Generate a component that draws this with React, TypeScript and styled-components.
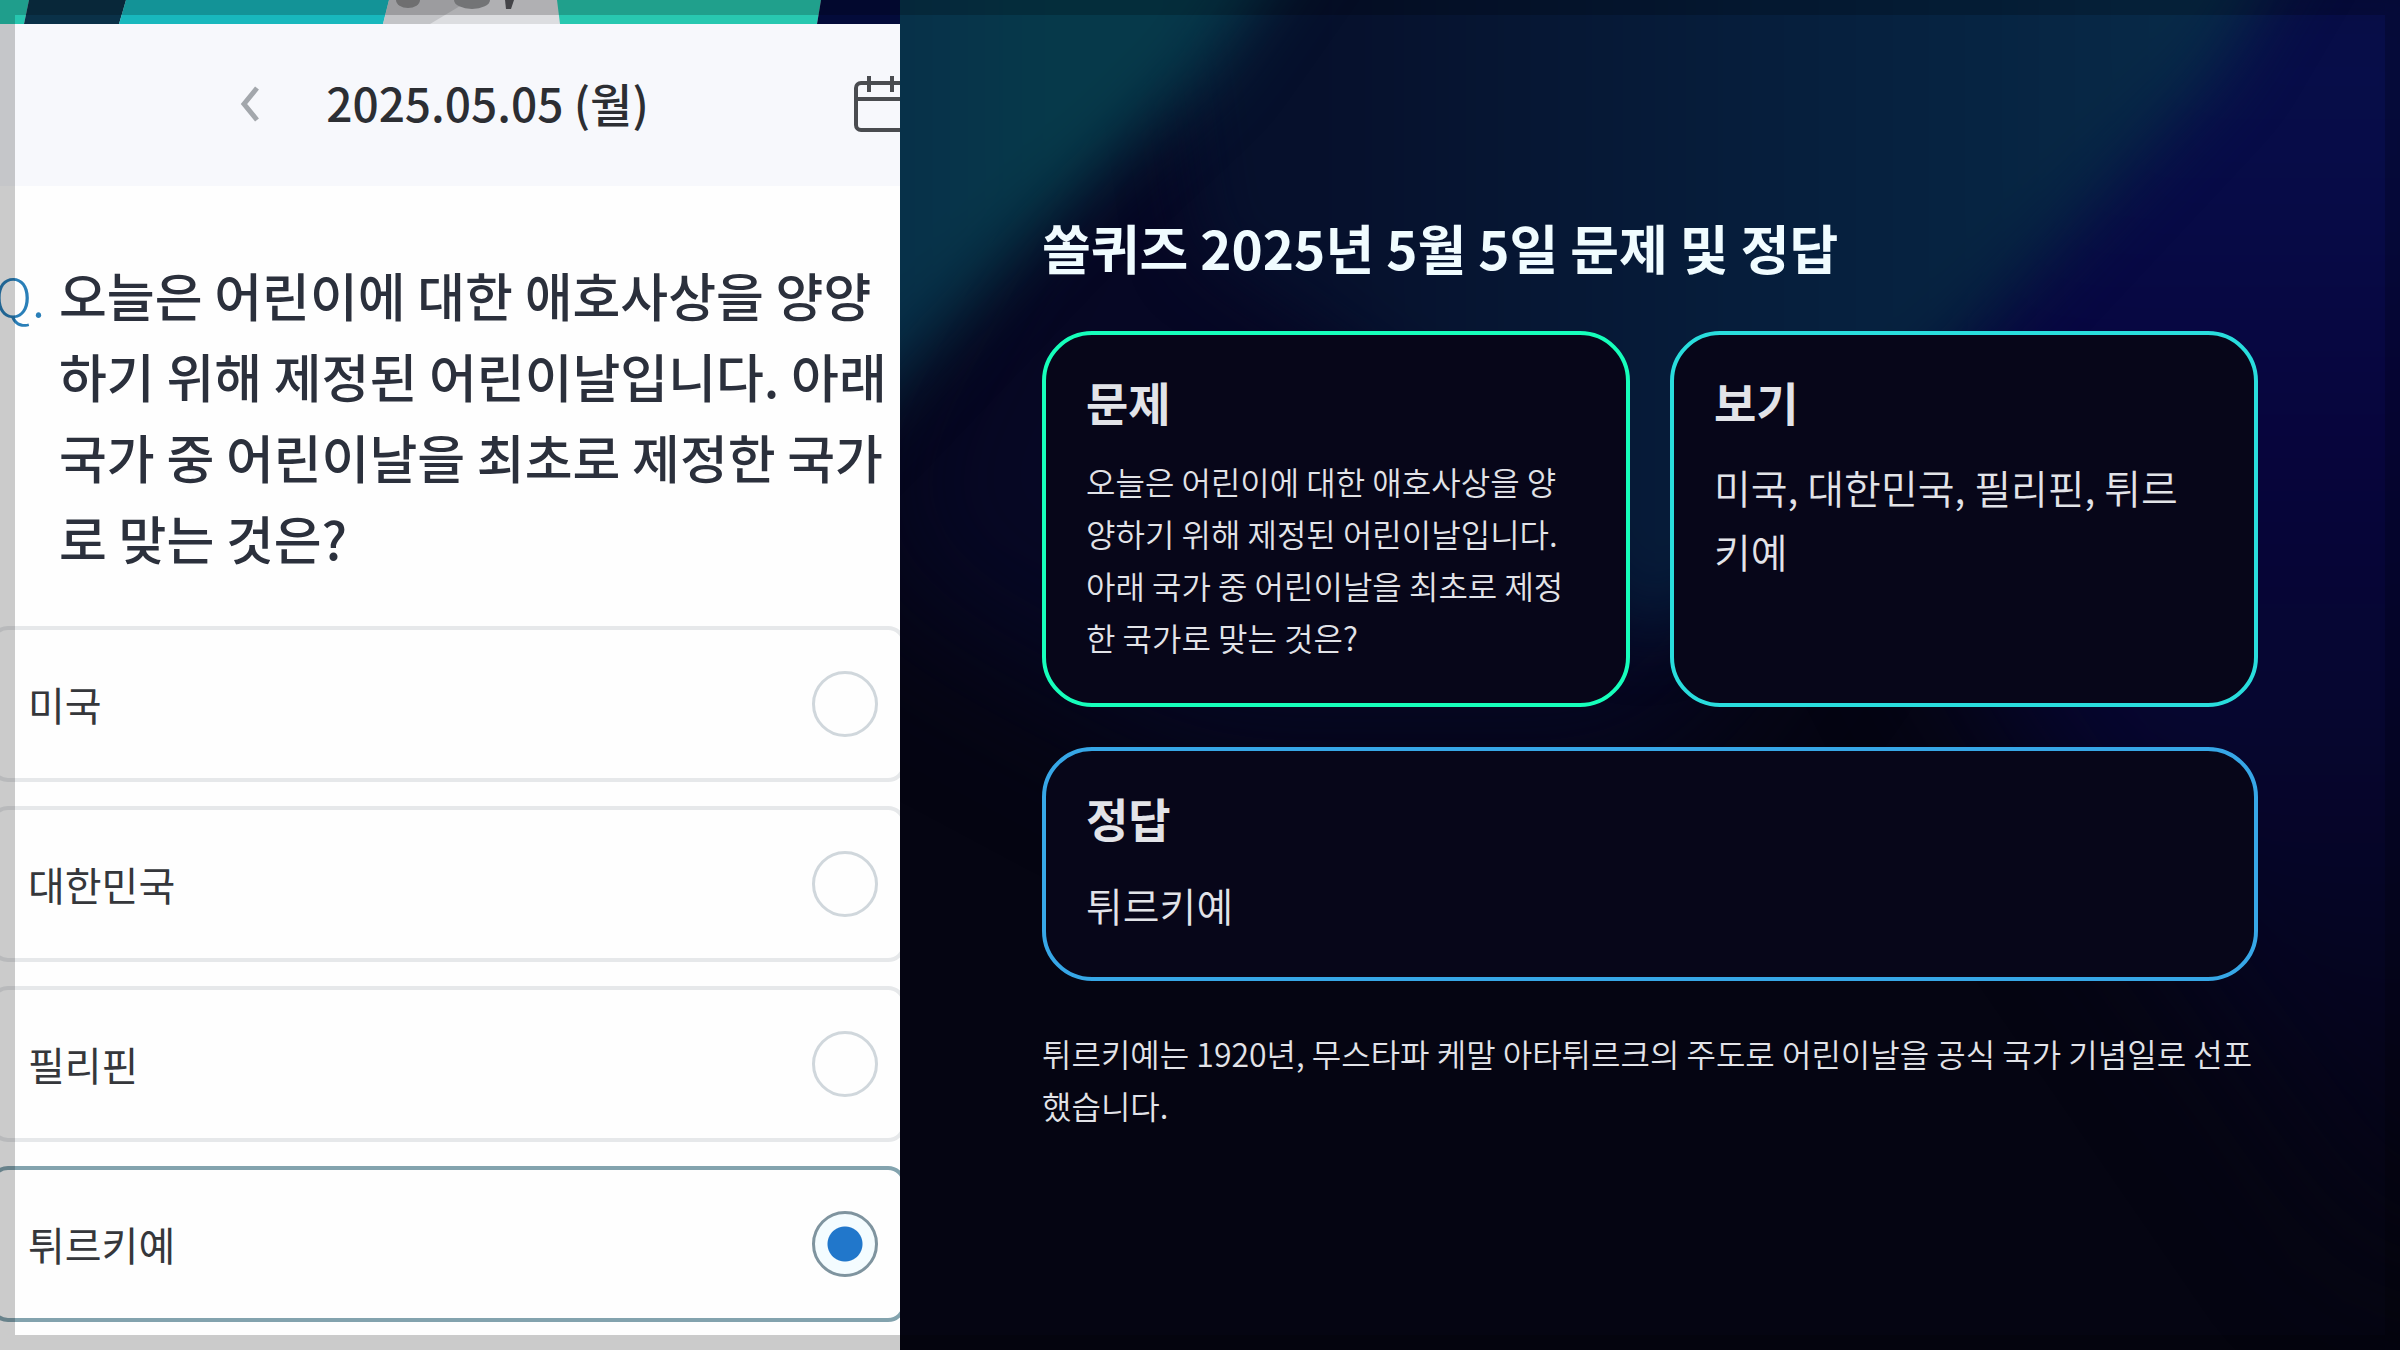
import React, { useState } from "react";
import styled, { createGlobalStyle } from "styled-components";

const GlobalStyle = createGlobalStyle`
  * { box-sizing: border-box; }
  html, body { margin: 0; padding: 0; }
  body {
    background: #050512;
    font-family: "Noto Sans CJK KR", "Noto Sans", sans-serif;
  }
  h1, h2, p { margin: 0; }
`;

const Slide = styled.main`
  position: relative;
  display: grid;
  grid-template-columns: 3fr 5fr;
  min-height: 100vh;
  overflow: hidden;
`;

const Frame = styled.div`
  position: absolute;
  inset: 0;
  border: 15px solid rgba(0, 0, 0, 0.2);
  pointer-events: none;
`;

/* ---------- quiz app capture ---------- */

const Capture = styled.section`
  display: flex;
  flex-direction: column;
  min-width: 0;
  overflow: hidden;
  background: #fefefe;
`;

const Banner = styled.svg`
  display: block;
  width: 100%;
  height: 24px;
  flex: none;
`;

const DateBar = styled.header`
  display: grid;
  grid-template-columns: 1fr auto 1fr;
  align-items: center;
  height: 162px;
  padding: 0 0 2px 75px;
  background: #f7f8fc;
`;

const IconButton = styled.button<{ $gap: number }>`
  display: flex;
  justify-self: end;
  margin: 0 ${(p) => p.$gap}px 0 0;
  padding: 0;
  border: 0;
  background: none;
`;

const DateText = styled.time`
  padding-bottom: 4px;
  font-size: 46px;
  line-height: 64px;
  font-weight: 500;
  color: #2c2e33;
`;

const Question = styled.div`
  display: flex;
  gap: 14px;
  margin: 68px 0 0 -11px;
  font-size: 52px;
  line-height: 81px;
  font-weight: 500;
  color: #2b303c;
  white-space: nowrap;
`;

const QuestionMark = styled.span`
  display: flex;
  justify-content: flex-end;
  width: 56px;
  font-weight: 300;
  color: #2a7fb8;
`;

const Options = styled.div`
  display: flex;
  flex-direction: column;
  gap: 24px;
  margin: 48px -6px 0 -10px;
`;

const Option = styled.label<{ $selected: boolean }>`
  display: flex;
  align-items: center;
  justify-content: space-between;
  height: 156px;
  padding: 0 24px 0 34px;
  border: 4px solid ${(p) => (p.$selected ? "#83a3ae" : "#e6e8ea")};
  border-radius: 18px;
  background: #fefefe;
  font-size: 40px;
  line-height: 56px;
  color: #35373b;
`;

const Radio = styled.input`
  appearance: none;
  width: 66px;
  height: 66px;
  margin: 0;
  border: 3px solid #d0d7dc;
  border-radius: 50%;
  background: #fefefe;

  &:checked {
    border-color: #7f949f;
    background: radial-gradient(circle, #2177cb 17px, #f4fcff 18px);
  }
`;

/* ---------- answer side ---------- */

const Answer = styled.section`
  position: relative;
  display: flex;
  flex-direction: column;
  justify-content: center;
  gap: 40px;
  min-width: 0;
  padding: 0 142px 8px;
  isolation: isolate;
`;

const Backdrop = styled.svg`
  position: absolute;
  inset: 0;
  z-index: -1;
  width: 100%;
  height: 100%;
`;

const Title = styled.h1`
  margin-bottom: 8px;
  font-size: 53px;
  line-height: 72px;
  font-weight: 700;
  color: #f0fcff;
`;

const Cards = styled.div`
  display: grid;
  grid-template-columns: 1fr 1fr;
  gap: 40px;
  margin-bottom: 6px;
`;

const Card = styled.article<{ $color: string; $wide?: boolean }>`
  display: flex;
  flex-direction: column;
  gap: ${(p) => (p.$wide ? "30px" : "28px")};
  grid-column: ${(p) => (p.$wide ? "1 / -1" : "auto")};
  padding: 40px;
  border: 4px solid ${(p) => p.$color};
  border-radius: 50px;
  background: #070619;
`;

const CardTitle = styled.h2`
  font-size: 46px;
  line-height: 52px;
  font-weight: 700;
  color: #e2e3e8;
`;

const Text = styled.p<{ $large?: boolean }>`
  font-size: ${(p) => (p.$large ? "40px" : "32px")};
  line-height: ${(p) => (p.$large ? "64px" : "52px")};
  font-weight: 350;
  color: #e2e3e8;
  word-break: break-all;
`;

const choices = ["미국", "대한민국", "필리핀", "튀르키예"];

const ChevronIcon = () => (
  <svg width="20" height="36" viewBox="0 0 20 36" fill="none" stroke="#a3a7ac" strokeWidth="5" aria-hidden="true">
    <path d="M17 2 L4 18 L17 34" />
  </svg>
);

const CalendarIcon = () => (
  <svg width="62" height="58" viewBox="0 0 62 58" fill="none" stroke="#4a4c50" strokeWidth="4" aria-hidden="true">
    <rect x="2" y="8" width="58" height="47" rx="5" />
    <path d="M2 24 H60 M15 1 V17 M38 1 V17" />
  </svg>
);

const BannerArt = () => (
  <Banner viewBox="0 0 900 24" preserveAspectRatio="none" aria-hidden="true">
    <rect width="900" height="24" fill="#dcdde0" />
    <path d="M0 0H29L24 24H0Z" fill="#27c6af" />
    <path d="M29 0H126L119 24H24Z" fill="#0a3148" />
    <path d="M126 0H389L383 24H119Z" fill="#18b8bd" />
    <path d="M389 0H470L430 24H383Z" fill="#c3c4c7" />
    <ellipse cx="408" cy="0" rx="12" ry="8" fill="#8b8b8d" />
    <ellipse cx="472" cy="0" rx="18" ry="9" fill="#909194" />
    <path d="M505 0H514L511 9H506Z" fill="#55565a" />
    <path d="M557 0H821L817 24H560Z" fill="#28c8b0" />
    <path d="M821 0H900V24H817Z" fill="#030b3a" />
  </Banner>
);

const BackdropArt = () => (
  <Backdrop viewBox="0 0 1500 1350" preserveAspectRatio="none" aria-hidden="true">
    <defs>
      <filter id="soft" x="-50%" y="-50%" width="200%" height="200%" colorInterpolationFilters="sRGB">
        <feGaussianBlur stdDeviation="32" />
      </filter>
      <filter id="haze" x="-50%" y="-50%" width="200%" height="200%" colorInterpolationFilters="sRGB">
        <feGaussianBlur stdDeviation="70" />
      </filter>
      <linearGradient id="fall" x1="0" y1="0" x2="0" y2="1">
        <stop offset="0" stopColor="#070f4a" />
        <stop offset="0.22" stopColor="#070c48" />
        <stop offset="0.36" stopColor="#07053f" />
        <stop offset="0.6" stopColor="#060630" />
        <stop offset="0.9" stopColor="#050418" />
        <stop offset="1" stopColor="#050512" />
      </linearGradient>
      <linearGradient id="beam" x1="0.15" y1="0" x2="0.9" y2="0">
        <stop offset="0" stopColor="#06102c" />
        <stop offset="0.5" stopColor="#061e3c" />
        <stop offset="1" stopColor="#072a48" />
      </linearGradient>
      <linearGradient id="teal" x1="0" y1="0" x2="1" y2="0">
        <stop offset="0" stopColor="#082b49" />
        <stop offset="0.5" stopColor="#063a4a" />
        <stop offset="1" stopColor="#06364a" />
      </linearGradient>
    </defs>
    <rect width="1500" height="1350" fill="#050512" />
    <path d="M1250 -100H1650V1250H1480L1100 700L950 400Z" fill="url(#fall)" filter="url(#haze)" />
    <path d="M-60 500L300 -200H900L900 560L750 760L300 760L0 600Z" fill="#060724" filter="url(#haze)" />
    <path d="M250 -100H1420L1320 70L1040 370L860 560L740 640L560 420L300 250Z" fill="url(#beam)" filter="url(#soft)" />
    <path d="M-100 -100H430L310 70L150 220L-40 420L-100 480Z" fill="url(#teal)" filter="url(#soft)" />
  </Backdrop>
);

export default function App() {
  const [picked, setPicked] = useState("튀르키예");

  return (
    <>
      <GlobalStyle />
      <Slide>
        <Capture>
          <BannerArt />
          <DateBar>
            <IconButton $gap={66} type="button" aria-label="이전 날짜">
              <ChevronIcon />
            </IconButton>
            <DateText dateTime="2025-05-05">2025.05.05 (월)</DateText>
            <IconButton $gap={-16} type="button" aria-label="달력">
              <CalendarIcon />
            </IconButton>
          </DateBar>
          <Question>
            <QuestionMark>Q.</QuestionMark>
            <p>
              오늘은 어린이에 대한 애호사상을 양양
              <br />
              하기 위해 제정된 어린이날입니다. 아래
              <br />
              국가 중 어린이날을 최초로 제정한 국가
              <br />로 맞는 것은?
            </p>
          </Question>
          <Options role="radiogroup" aria-label="보기">
            {choices.map((choice) => (
              <Option key={choice} $selected={picked === choice}>
                {choice}
                <Radio
                  type="radio"
                  name="choice"
                  value={choice}
                  checked={picked === choice}
                  onChange={() => setPicked(choice)}
                />
              </Option>
            ))}
          </Options>
        </Capture>

        <Answer>
          <BackdropArt />
          <Title>쏠퀴즈 2025년 5월 5일 문제 및 정답</Title>
          <Cards>
            <Card $color="#16ffbb">
              <CardTitle>문제</CardTitle>
              <Text>
                오늘은 어린이에 대한 애호사상을 양
                <br />
                양하기 위해 제정된 어린이날입니다.
                <br />
                아래 국가 중 어린이날을 최초로 제정
                <br />한 국가로 맞는 것은?
              </Text>
            </Card>
            <Card $color="#29dddd">
              <CardTitle>보기</CardTitle>
              <Text $large>
                미국, 대한민국, 필리핀, 튀르
                <br />
                키예
              </Text>
            </Card>
            <Card $color="#37a7e7" $wide>
              <CardTitle>정답</CardTitle>
              <Text $large>튀르키예</Text>
            </Card>
          </Cards>
          <Text>
            튀르키예는 1920년, 무스타파 케말 아타튀르크의 주도로 어린이날을 공식 국가 기념일로 선포했습니다.
          </Text>
        </Answer>
        <Frame />
      </Slide>
    </>
  );
}
